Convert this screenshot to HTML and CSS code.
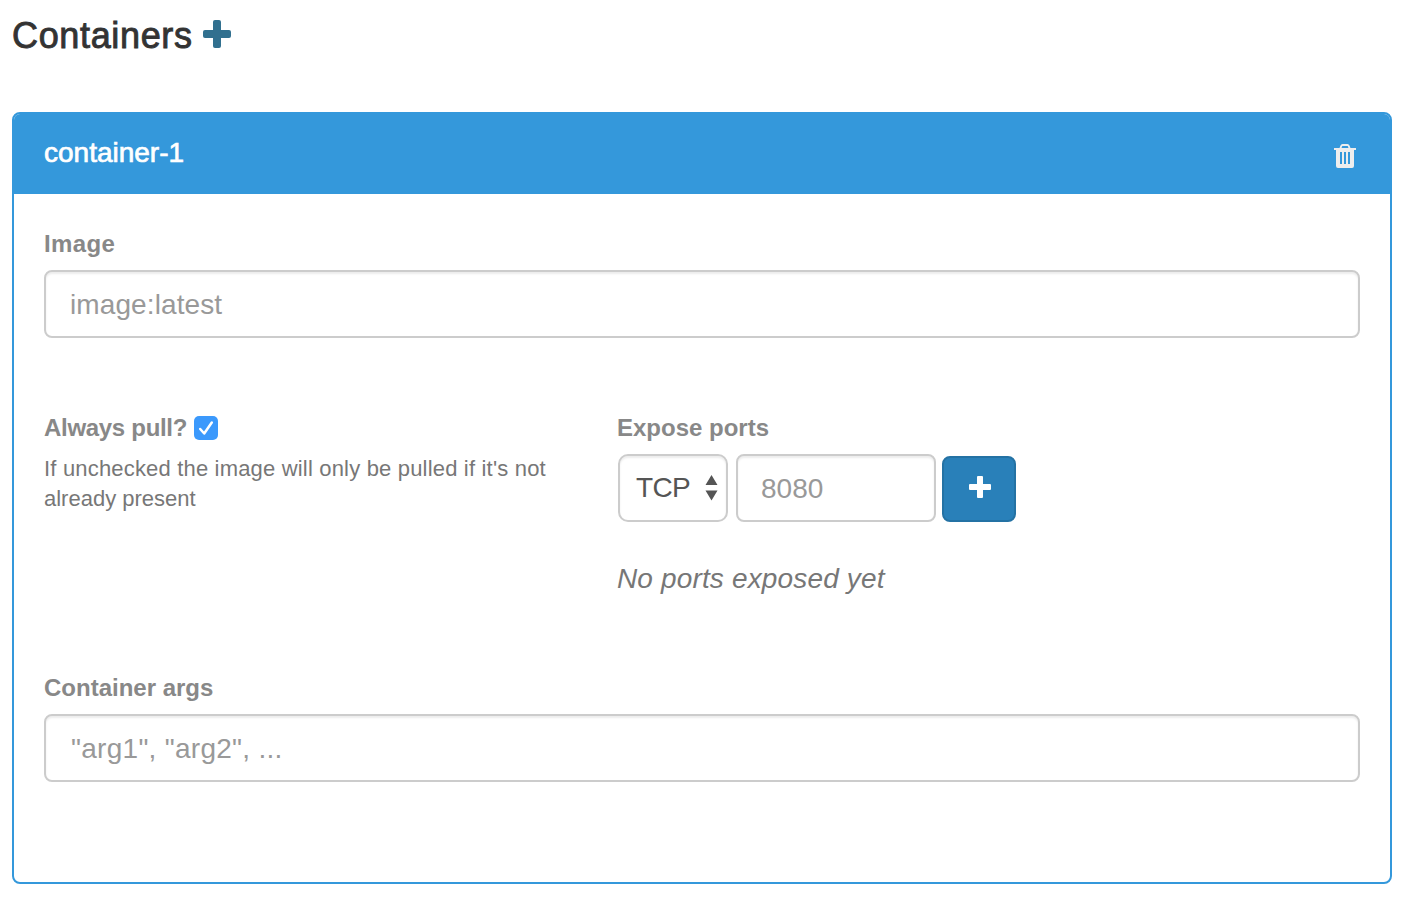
FILE: index.html
```html
<!DOCTYPE html>
<html lang="en">
<head>
<meta charset="utf-8">
<title>Containers</title>
<link rel="stylesheet" href="styles.css">
</head>
<body>
<main class="page">
  <h1 class="title"><span class="title-text">Containers</span>
    <svg class="title-add" viewBox="0 0 28 28"><rect x="10" y="0" width="8" height="28" rx="2"/><rect x="0" y="10" width="28" height="8" rx="2"/></svg>
  </h1>
  <section class="panel">
    <header class="panel-header">
      <span class="panel-name">container-1</span>
      <svg class="trash" viewBox="0 0 22 24"><path fill-rule="evenodd" d="M0 4H5.5L6.5 1.500Q7 0 8.500 0H13.500Q15 0 15.500 1.500L16.500 4H22V6H20V22Q20 24 18 24H4Q2 24 2 22V6H0ZM7.500 4H14.500L13.700 2H8.300ZM6 8V20H8V8ZM10 8V20H12V8ZM14 8V20H16V8Z"/></svg>
    </header>
    <div class="panel-body">
      <div class="field">
        <label class="label label-image" for="image">Image</label>
        <input class="input input-image" id="image" type="text" placeholder="image:latest">
      </div>
      <div class="columns">
        <div class="column-pull">
          <div class="label pull-label"><span class="pull-text">Always pull?</span>
            <span class="checkbox"><svg class="check" viewBox="0 0 24 24"><path d="M6.200 13L10.200 17.500L17.800 6.500"/></svg></span>
          </div>
          <p class="help"><span class="help-first">If unchecked the image will only be pulled if it's not</span><br>already present</p>
        </div>
        <div class="column-ports">
          <div class="label label-ports">Expose ports</div>
          <div class="controls">
            <div class="select"><span class="select-text">TCP</span><svg class="arrows" viewBox="0 0 13 26"><path d="M6.500 0L12.500 10H.5ZM.5 15.500H12.500L6.500 25.500Z"/></svg></div>
            <input class="input port" type="text" placeholder="8080">
            <button class="add" type="button" aria-label="Add port"><svg class="add-icon" viewBox="0 0 22 22"><rect x="8" y="0" width="6" height="22" rx="1"/><rect x="0" y="8" width="22" height="6" rx="1"/></svg></button>
          </div>
          <p class="empty">No ports exposed yet</p>
        </div>
      </div>
      <div class="field">
        <label class="label label-args" for="args">Container args</label>
        <input class="input input-args" id="args" type="text" placeholder="&quot;arg1&quot;, &quot;arg2&quot;, ...">
      </div>
    </div>
  </section>
</main>
</body>
</html>
```
FILE: styles.css
```css
* { box-sizing: border-box; }
body {
  margin: 0;
  background: #fff;
  color: #777;
  font-family: "Liberation Sans", Arial, sans-serif;
  font-size: 28px;
}
.page { padding: 12px 16px 0 12px; }
.title {
  display: flex;
  align-items: flex-start;
  height: 100px;
  margin: 0;
  color: #333;
  font-size: 36px;
  font-weight: 400;
  line-height: 48px;
}
.title-text { width: 191px; letter-spacing: .65px; -webkit-text-stroke: .9px #333; }
.title-add { width: 28px; height: 28px; margin-top: 8px; fill: #31708f; }
.panel {
  height: 772px;
  border: 2px solid #3498db;
  border-radius: 8px;
}
.panel-header {
  display: flex;
  justify-content: space-between;
  height: 80px;
  padding: 22px 34px 0 30px;
  background: #3498db;
  border-radius: 6px 6px 0 0;
  color: #fff;
}
.panel-name { line-height: 34px; -webkit-text-stroke: .7px #fff; }
.trash { width: 22px; height: 24px; margin-top: 8px; fill: #eee; }
.panel-body { padding: 30px 30px 0; }
.label {
  display: block;
  height: 46px;
  color: #888;
  font-size: 24px;
  font-weight: 700;
  line-height: 40px;
}
.label-image { letter-spacing: .4px; }
.input {
  display: block;
  width: 100%;
  height: 68px;
  padding: 2px 24px 0;
  border: 2px solid #ccc;
  border-radius: 8px;
  background: #fff;
  box-shadow: inset 0 2px 2px rgba(0, 0, 0, .075);
  color: #555;
  font: 28px "Liberation Sans", Arial, sans-serif;
}
.input::placeholder { color: #999; opacity: 1; }
.input-image { letter-spacing: .1px; }
.input-args { padding-left: 25px; letter-spacing: .28px; }
.columns {
  display: grid;
  grid-template-columns: 573px 1fr;
  height: 260px;
  margin-top: 70px;
}
.pull-label { display: flex; height: 46px; }
.pull-text { width: 150px; letter-spacing: -.3px; }
.checkbox { width: 24px; height: 24px; margin-top: 8px; border-radius: 5px; background: #3b99fc; }
.check { display: block; width: 24px; height: 24px; fill: none; stroke: #fff; stroke-width: 2.5; stroke-linecap: round; stroke-linejoin: round; }
.help { margin: 0; font-size: 22px; line-height: 30px; white-space: nowrap; }
.help-first { letter-spacing: .18px; }
.controls { display: flex; padding-left: 1px; }
.select {
  display: flex;
  align-items: center;
  justify-content: space-between;
  width: 110px;
  height: 68px;
  margin-right: 8px;
  padding: 0 8px 0 16px;
  border: 2px solid #ccc;
  border-radius: 10px;
  box-shadow: inset 0 2px 2px rgba(0, 0, 0, .075);
  color: #555;
}
.select-text { letter-spacing: -.7px; }
.arrows { width: 13px; height: 26px; fill: #555; }
.port { width: 200px; padding: 2px 23px 0; }
.add {
  width: 74px;
  height: 66px;
  margin: 2px 0 0 6px;
  padding: 0 0 4px 2px;
  border: 2px solid #2472a4;
  border-radius: 8px;
  background: #2980b9;
}
.add-icon { display: block; width: 22px; height: 22px; margin: 0 auto; fill: #fff; }
.empty { margin: 37px 0 0; font-style: italic; letter-spacing: .15px; line-height: 40px; }
```
